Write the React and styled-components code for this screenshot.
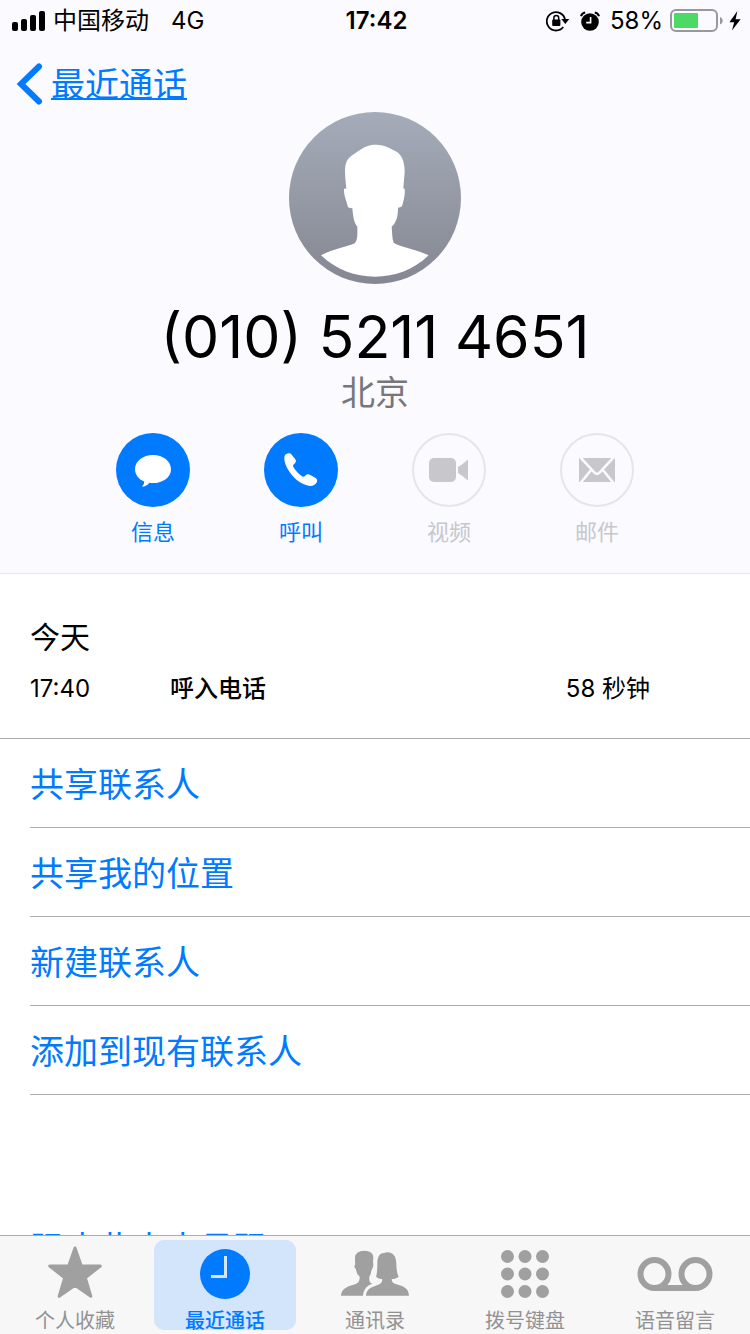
import React from 'react';
import styled, {createGlobalStyle} from "styled-components";

const GlobalStyle = createGlobalStyle`
  * {
    box-sizing: border-box;
  }

  body {
    margin: 0;
    background: #fff;
    color: #000;
    font-family: Inter, "Noto Sans CJK SC", sans-serif;
  }

  button {
    font: inherit;
    color: inherit;
    background: none;
    border: 0;
    padding: 0;
    cursor: pointer;
  }
`
const Screen = styled.div`
  height: 100vh;
  display: flex;
  flex-direction: column;
`
const Scroll = styled.main`
  flex: 1;
  min-height: 0;
  overflow-y: auto;
  scrollbar-width: none;
`
const Header = styled.header`
  background: #fafaff;
  border-bottom: 1px solid #e8e8ec;
  padding-bottom: 24px;
`
const StatusBar = styled.div`
  display: grid;
  grid-template-columns: 1fr auto 1fr;
  align-items: center;
  height: 42px;
  padding: 0 9px 0 12px;
  font-size: 24px;
  line-height: 42px;
`
const StatusGroup = styled.div`
  display: flex;
  align-items: center;
  justify-content: ${p => p.$end ? 'flex-end' : 'flex-start'};
  gap: ${p => p.$gap}px;
`
const Network = styled.span`
  margin-left: 14px;
`
const Time = styled.span`
  font-weight: 600;
`
const NavBar = styled.nav`
  height: 70px;
  padding: 18px 16px 0;
`
const BackLink = styled.a`
  display: inline-flex;
  align-items: center;
  gap: 8px;
  height: 48px;
  color: #007aff;
  font-size: 34px;
  line-height: 46px;
  text-decoration: none;

  span {
    padding-top: 2px;
    text-decoration: underline;
    text-decoration-thickness: 2px;
    text-underline-offset: 1px;
  }
`
const Person = styled.div`
  display: flex;
  flex-direction: column;
  align-items: center;
`
const Phone = styled.h1`
  margin: 17px 0 0;
  font-size: 59px;
  font-weight: 400;
  line-height: 72px;
`
const City = styled.p`
  margin: 0;
  color: #77777b;
  font-size: 34px;
  line-height: 40px;
`
const Actions = styled.div`
  display: flex;
  justify-content: center;
  margin-top: 20px;
`
const Action = styled.button`
  display: flex;
  flex-direction: column;
  align-items: center;
  gap: 9px;
  width: 148px;
  font-size: 22px;
  line-height: 33px;
  color: #007aff;

  &:disabled {
    color: #c7c7cc;
    cursor: default;
  }
`
const Circle = styled.span`
  display: flex;
  align-items: center;
  justify-content: center;
  width: 74px;
  height: 74px;
  border-radius: 50%;
  background: #007aff;

  ${Action}:disabled & {
    background: none;
    border: 2px solid #e5e5ea;
  }
`
const Log = styled.section`
  padding: 41px 100px 31px 30px;
  border-bottom: 1px solid #adadb0;
`
const Day = styled.h2`
  margin: 0;
  font-size: 30px;
  font-weight: 400;
  line-height: 44px;
`
const CallRow = styled.div`
  display: grid;
  grid-template-columns: 140px 1fr auto;
  margin-top: 12px;
  font-size: 24px;
  line-height: 36px;
`
const CallType = styled.span`
  font-weight: 500;
`
const List = styled.ul`
  list-style: none;
  margin: 0;
  padding: 0 0 0 30px;
`
const Item = styled.li`
  border-bottom: 1px solid #adadb0;
`
const ItemButton = styled.button`
  display: block;
  width: 100%;
  height: 88px;
  padding-top: 4px;
  text-align: left;
  font-size: 34px;
  line-height: 84px;
  color: #007aff;
`
const BlockArea = styled.div`
  padding: 108px 0 0 30px;
`
const TabBar = styled.nav`
  display: flex;
  height: 99px;
  padding: 4px 0;
  border-top: 1px solid #adadb0;
  background: #f7f7f8;
`
const Tab = styled.button`
  flex: 1;
  display: flex;
  flex-direction: column;
  align-items: center;
  margin: 0 4px;
  border-radius: 10px;
  font-size: 20px;
  line-height: 20px;
  font-weight: ${p => p.$active ? 500 : 400};
  color: ${p => p.$active ? '#007aff' : '#929292'};
  background: ${p => p.$active ? '#d3e5fa' : 'none'};

  svg {
    display: block;
    flex-shrink: 0;
    margin-bottom: 3px;
    color: ${p => p.$active ? '#007aff' : '#a0a0a0'};
  }
`

const SignalIcon = () => (
    <svg width="33" height="20" viewBox="0 0 33 20">
        <rect x="0" y="11" width="6" height="9" rx="2"/>
        <rect x="9" y="8" width="6" height="12" rx="2"/>
        <rect x="18" y="4" width="6" height="16" rx="2"/>
        <rect x="27" y="0" width="6" height="20" rx="2"/>
    </svg>
)
const LockIcon = () => (
    <svg width="24" height="22" viewBox="0 0 24 22">
        <path d="M17.2 17A9.200 9.200 0 1 1 19 9.500" fill="none" stroke="#000" strokeWidth="1.800"/>
        <path d="M15.300 9h8L19.300 14z"/>
        <rect x="6.200" y="9.600" width="8.200" height="6.400" rx="1"/>
        <path d="M7.900 10V7.800a2.400 2.400 0 0 1 4.800 0V10" fill="none" stroke="#000" strokeWidth="1.500"/>
    </svg>
)
const AlarmIcon = () => (
    <svg width="20" height="20" viewBox="0 0 20 20">
        <circle cx="10" cy="11" r="8.800"/>
        <path d="M1 5.200Q1.800 2 5.200 1.400M19 5.200Q18.200 2 14.800 1.400" fill="none" stroke="#000" strokeWidth="2"/>
        <path d="M10.600 6v5.600H6.200" fill="none" stroke="#fff" strokeWidth="1.600"/>
    </svg>
)
const BatteryIcon = () => (
    <svg width="54" height="24" viewBox="0 0 54 24">
        <rect x="2" y="1" width="46" height="21" rx="5" fill="none" stroke="#98989d" strokeWidth="2"/>
        <rect x="5" y="4" width="24" height="15" rx="1" fill="#4cd964"/>
        <path d="M51 8c3.600 1.400 3.600 6 0 7.400z" fill="#98989d"/>
    </svg>
)
const BoltIcon = () => (
    <svg width="12" height="20" viewBox="0 0 12 20">
        <path d="M8.400 0L0.400 11.200h4.800L3 19.600 11.600 8.200H6.600z"/>
    </svg>
)
const ChevronIcon = () => (
    <svg width="27" height="42" viewBox="0 0 27 42">
        <path d="M23 3.500L5 21l18 17.500" fill="none" stroke="#007aff" strokeWidth="6" strokeLinecap="round"/>
    </svg>
)
const Avatar = () => (
    <svg width="172" height="172" viewBox="27 36 516 516">
        <defs>
            <linearGradient id="avatar" x1="0" y1="0" x2="0" y2="1">
                <stop offset="0" stopColor="#a5abb9"/>
                <stop offset="1" stopColor="#858892"/>
            </linearGradient>
        </defs>
        <circle cx="285" cy="294" r="258" fill="url(#avatar)"/>
        <path fill="#fff" d="M287 134C318 134 332 147 346 153C367 164 374 188 374 216L370 264L374 267C376 286 371 300 366 319Q360 323 354 323C354 345 351 366 335 380C337 400 336 416 341 428C358 440 402 445 446 466C400 510 345 530 285 530C225 530 170 510 123 466C160 446 205 440 224 430C234 420 232 400 232 380C221 368 219 345 217 325Q210 325 204 322C199 300 191 286 192 267L199 265C196 240 195 222 195 208C197 172 216 168 235 153C252 141 266 134 287 134Z"/>
    </svg>
)
const MessageIcon = () => (
    <svg width="36" height="34" viewBox="0 0 36 34">
        <path fill="#fff" d="M18 2C28 2 36 8.200 36 16.200S28 30.100 18 30.100q-2 0-3.600-.3Q11.500 33.500 7 33.800q2.600-2.500 2.200-5.200C3.500 26.100 0 21.500 0 16.200 0 8.200 8 2 18 2z"/>
    </svg>
)
const PhoneIcon = () => (
    <svg width="34" height="34" viewBox="551 101 100 100">
        <path fill="#fff" d="M554 107C559 102 566 101 571 103C575 106 578 112 584 119C588 125 586 130 580 134C577 137 577 140 579 143C585 153 594 163 605 170C608 172 611 171 613 168C617 163 622 162 627 165L643 174C649 178 650 183 647 188C641 198 630 200 618 196C590 187 566 162 555 133C551 121 551 112 554 107Z"/>
    </svg>
)
const VideoIcon = () => (
    <svg width="40" height="24" viewBox="0 0 40 24">
        <rect x="0" y="0" width="27" height="24" rx="5" fill="#c7c7cc"/>
        <path d="M29 9Q34 6 39 1.500V22.500Q34 18 29 15z" fill="#c7c7cc"/>
    </svg>
)
const MailIcon = () => (
    <svg width="36" height="24" viewBox="0 0 36 24">
        <rect width="36" height="24" fill="#c7c7cc"/>
        <path d="M1 -1L15.500 14.600Q18 17.200 20.500 14.600L35 -1M12.500 11.500L1.500 25M23.500 11.500L34.500 25" fill="none" stroke="#fafaff" strokeWidth="2.600"/>
    </svg>
)

const StarIcon = () => (
    <svg width="56" height="68" viewBox="0 0 56 68" fill="currentColor">
        <path stroke="currentColor" strokeWidth="3" strokeLinejoin="round" d="M28 8L34.300 26H53.300L38.300 37.800 43.800 56.300 28 45.300 12.200 56.300 17.700 37.800 2.700 26H21.700z"/>
    </svg>
)
const ClockIcon = () => (
    <svg width="50" height="68" viewBox="0 0 50 68">
        <circle cx="25" cy="34" r="25" fill="currentColor"/>
        <path d="M25.500 16V36.500H11" fill="none" stroke="#d3e5fa" strokeWidth="3"/>
    </svg>
)
const ContactsIcon = () => (
    <svg width="68" height="68" viewBox="18 -12 204 204" fill="currentColor">
        <path d="M18 155C20 132 38 128 62 120Q75 115 74 98Q64 90 63 76Q59 74 58 66Q62 62 60 55L60 40Q62 20 88 20Q114 21 115 40L114 55Q116 60 114 70Q111 76 109 80Q108 92 103 98Q102 112 106 116L112 119Q86 127 84 155Z"/>
        <path d="M93 155C94 132 112 129 130 122Q142 118 142 106Q130 105 123 98Q127 90 127 60C127 38 134 26 148 27Q153 24 160 25C178 27 184 42 184 60Q184 85 191 98Q184 105 170 106Q170 118 184 121C206 126 221 134 222 155Z"/>
    </svg>
)
const KeypadIcon = () => (
    <svg width="48" height="68" viewBox="0 0 48 68" fill="currentColor">
        {[16.5, 34, 51.5].map(y => [6.5, 24, 41.5].map(x => (
            <circle key={`${x}-${y}`} cx={x} cy={y} r="6.500"/>
        )))}
    </svg>
)
const VoicemailIcon = () => (
    <svg width="76" height="68" viewBox="0 0 76 68" fill="none" stroke="currentColor" strokeWidth="6">
        <circle cx="17.500" cy="34" r="14"/>
        <circle cx="58.500" cy="34" r="14"/>
        <path d="M17.500 48H58.500"/>
    </svg>
)

const actions = [
    {label: '信息', icon: <MessageIcon/>},
    {label: '呼叫', icon: <PhoneIcon/>},
    {label: '视频', icon: <VideoIcon/>, disabled: true},
    {label: '邮件', icon: <MailIcon/>, disabled: true},
]
const links = ['共享联系人', '共享我的位置', '新建联系人', '添加到现有联系人']
const tabs = [
    {label: '个人收藏', icon: <StarIcon/>},
    {label: '最近通话', icon: <ClockIcon/>, active: true},
    {label: '通讯录', icon: <ContactsIcon/>},
    {label: '拨号键盘', icon: <KeypadIcon/>},
    {label: '语音留言', icon: <VoicemailIcon/>},
]

const App = () => {
    return (
        <Screen lang="zh-CN">
            <GlobalStyle/>
            <Scroll>
                <Header>
                    <StatusBar>
                        <StatusGroup $gap={8}>
                            <SignalIcon/>
                            <span>中国移动</span>
                            <Network>4G</Network>
                        </StatusGroup>
                        <Time>17:42</Time>
                        <StatusGroup $end $gap={10}>
                            <LockIcon/>
                            <AlarmIcon/>
                            <StatusGroup $gap={6}>
                                <span>58%</span>
                                <BatteryIcon/>
                                <BoltIcon/>
                            </StatusGroup>
                        </StatusGroup>
                    </StatusBar>
                    <NavBar>
                        <BackLink href="#recents">
                            <ChevronIcon/>
                            <span>最近通话</span>
                        </BackLink>
                    </NavBar>
                    <Person>
                        <Avatar/>
                        <Phone>(010) 5211 4651</Phone>
                        <City>北京</City>
                    </Person>
                    <Actions>
                        {actions.map(a => (
                            <Action key={a.label} type="button" disabled={a.disabled}>
                                <Circle>{a.icon}</Circle>
                                {a.label}
                            </Action>
                        ))}
                    </Actions>
                </Header>

                <Log>
                    <Day>今天</Day>
                    <CallRow>
                        <span>17:40</span>
                        <CallType>呼入电话</CallType>
                        <span>58 秒钟</span>
                    </CallRow>
                </Log>

                <List>
                    {links.map(text => (
                        <Item key={text}>
                            <ItemButton type="button">{text}</ItemButton>
                        </Item>
                    ))}
                </List>
                <BlockArea>
                    <ItemButton type="button">阻止此来电号码</ItemButton>
                </BlockArea>
            </Scroll>

            <TabBar>
                {tabs.map(t => (
                    <Tab key={t.label} type="button" $active={t.active}>
                        {t.icon}
                        {t.label}
                    </Tab>
                ))}
            </TabBar>
        </Screen>
    );
};

export default App;
